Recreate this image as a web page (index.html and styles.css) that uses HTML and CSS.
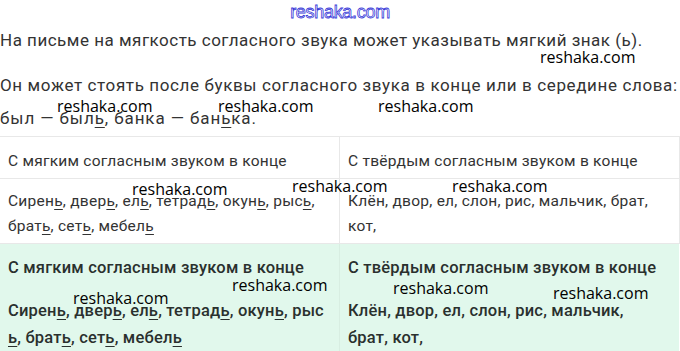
FILE: index.html
```html
<!DOCTYPE html>
<html lang="ru">
<head>
<meta charset="utf-8">
<link rel="stylesheet" href="styles.css">
</head>
<body>
<div class="page">
  <div class="site">reshaka.com</div>
  <p class="txt first">На письме на мягкость согласного звука может указывать мягкий знак (ь).</p>
  <p class="txt second">Он может стоять после буквы согласного звука в конце или в середине слова:</p>
  <p class="txt third">был — был<u>ь</u>, банка — бан<u>ь</u>ка.</p>

  <div class="tbl plain">
    <div class="cell head">С мягким согласным звуком в конце</div>
    <div class="cell head">С твёрдым согласным звуком в конце</div>
    <div class="cell body">Сирен<u>ь</u>, двер<u>ь</u>, ел<u>ь</u>, тетрад<u>ь</u>, окун<u>ь</u>, рыс<u>ь</u>,<br>брат<u>ь</u>, сет<u>ь</u>, мебел<u>ь</u></div>
    <div class="cell body">Клён, двор, ел, слон, рис, мальчик, брат,<br>кот,</div>
  </div>

  <div class="tbl green">
    <div class="cell head">С мягким согласным звуком в конце</div>
    <div class="cell head">С твёрдым согласным звуком в конце</div>
    <div class="cell body">Сирен<u>ь</u>, двер<u>ь</u>, ел<u>ь</u>, тетрад<u>ь</u>, окун<u>ь</u>, рыс<br><u>ь</u>, брат<u>ь</u>, сет<u>ь</u>, мебел<u>ь</u></div>
    <div class="cell body">Клён, двор, ел, слон, рис, мальчик,<br>брат, кот,</div>
  </div>

  <span class="wm" style="left:540px;top:47px">reshaka.com</span>
  <span class="wm" style="left:57px;top:96px">reshaka.com</span>
  <span class="wm" style="left:218px;top:96px">reshaka.com</span>
  <span class="wm" style="left:378px;top:96px">reshaka.com</span>
  <span class="wm" style="left:132px;top:179px">reshaka.com</span>
  <span class="wm" style="left:292px;top:176px">reshaka.com</span>
  <span class="wm" style="left:452px;top:176px">reshaka.com</span>
  <span class="wm" style="left:232px;top:275px">reshaka.com</span>
  <span class="wm" style="left:73px;top:288px">reshaka.com</span>
  <span class="wm" style="left:393px;top:278px">reshaka.com</span>
  <span class="wm" style="left:553px;top:283px">reshaka.com</span>
</div>
</body>
</html>
```
FILE: styles.css
```css
html, body {
  margin: 0;
  padding: 0;
  background: #ffffff;
}
.page {
  position: relative;
  width: 680px;
  height: 351px;
  overflow: hidden;
  font-family: Roboto, "Noto Sans", sans-serif;
  color: #333333;
}
.site {
  height: 26px;
  text-align: center;
  font-family: "Liberation Sans Narrow", "Liberation Sans", sans-serif;
  font-size: 18px;
  line-height: 24px;
  color: transparent;
  -webkit-text-stroke: 0.8px #3a3ad8;
  letter-spacing: -0.3px;
}
.txt {
  margin: 0;
  font-size: 17px;
  letter-spacing: 0.5px;
  line-height: 22px;
  white-space: nowrap;
}
.first { margin-top: 3px; }
.second { margin-top: 23px; letter-spacing: 0.62px; }
.third { margin-top: 11px; letter-spacing: 0.9px; }
u {
  text-decoration: underline;
  text-underline-offset: 3px;
  text-decoration-thickness: 1px;
}
.tbl {
  display: grid;
  grid-template-columns: 340px 339px;
  width: 679px;
}
.plain {
  margin-top: 7px;
  border-top: 1px solid #e8e8e8;
  border-right: 1px solid #e8e8e8;
  font-size: 15.5px;
  letter-spacing: 0.25px;
}
.plain .cell {
  border-bottom: 1px solid #e8e8e8;
  padding: 0 8px;
  white-space: nowrap;
}
.plain .cell:nth-child(odd) {
  border-right: 1px solid #e8e8e8;
}
.plain .head {
  padding-top: 3px;
  height: 38px;
  line-height: 42px;
}
.plain .body {
  padding-top: 10px;
  line-height: 25px;
  box-sizing: border-box;
  height: 65px;
}
.green {
  background: #e1f8ec;
  font-size: 16.5px;
  letter-spacing: 0.2px;
  font-weight: 500;
  color: #2a302e;
}
.green .cell {
  padding: 0 8px;
  white-space: nowrap;
}
.green .cell:nth-child(odd) {
  border-right: 1px solid #d8eee2;
}
.green .head {
  height: 47px;
  line-height: 48px;
}
.green .body {
  padding-top: 6px;
  line-height: 27px;
  height: 70px;
}
.wm {
  position: absolute;
  font-family: "Open Sans", sans-serif;
  font-size: 16px;
  line-height: 20px;
  color: #000000;
  white-space: nowrap;
}
```
